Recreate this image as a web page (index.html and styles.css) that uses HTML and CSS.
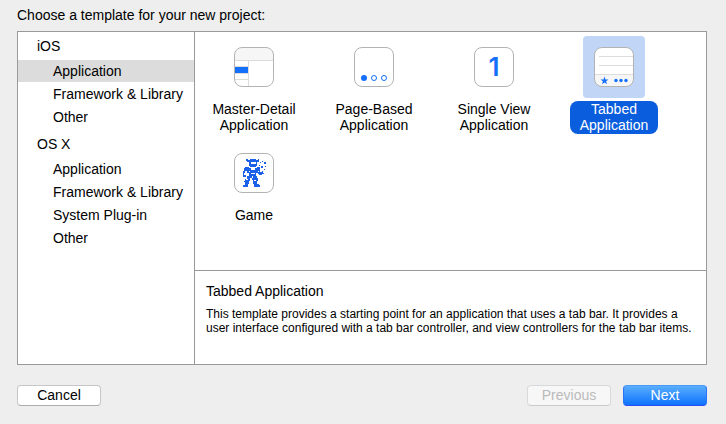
FILE: index.html
```
<!DOCTYPE html>
<html lang="en">

<head>
    <meta charset="UTF-8">
    <meta name="viewport" content="width=device-width, initial-scale=1.0">
    <title>New Project</title>
    <link rel="stylesheet" href="styles.css">
</head>

<body>
    <h1 class="sheet-title">Choose a template for your new project:</h1>

    <main class="panel">
        <!-- Sidebar -->
        <nav class="sidebar">
            <section class="group">
                <h2 class="group-title">iOS</h2>
                <a href="#ios-application" class="group-item active">Application</a>
                <a href="#ios-framework" class="group-item">Framework &amp; Library</a>
                <a href="#ios-other" class="group-item">Other</a>
            </section>
            <section class="group">
                <h2 class="group-title">OS X</h2>
                <a href="#osx-application" class="group-item">Application</a>
                <a href="#osx-framework" class="group-item">Framework &amp; Library</a>
                <a href="#osx-plugin" class="group-item">System Plug-in</a>
                <a href="#osx-other" class="group-item">Other</a>
            </section>
        </nav>

        <div class="content">
            <!-- Templates -->
            <div class="templates">
                <button type="button" class="template">
                    <span class="template-icon">
                        <svg viewBox="0 0 40 40" width="40" height="40">
                            <rect x="0.5" y="0.5" width="39" height="39" rx="7.5" fill="#fff" />
                            <path d="M1 13.5V8a7 7 0 0 1 7-7h24a7 7 0 0 1 7 7v5.5z" fill="#f6f6f6" />
                            <path d="M1 13.5h38M14.5 14v25M1 19.5h13M1 26.5h13M1 32.5h13" stroke="#dcdcdc" fill="none" />
                            <rect x="1" y="20" width="13" height="6" fill="#146ffb" />
                            <rect x="0.5" y="0.5" width="39" height="39" rx="7.5" fill="none" stroke="#b3b3b3" />
                        </svg>
                    </span>
                    <span class="template-name">Master-Detail<br>Application</span>
                </button>
                <button type="button" class="template">
                    <span class="template-icon">
                        <svg viewBox="0 0 40 40" width="40" height="40">
                            <rect x="0.5" y="0.5" width="39" height="39" rx="7.5" fill="#fff" stroke="#b3b3b3" />
                            <circle cx="10" cy="31" r="3" fill="#146ffb" />
                            <circle cx="20" cy="31" r="2.5" fill="none" stroke="#146ffb" />
                            <circle cx="30" cy="31" r="2.5" fill="none" stroke="#146ffb" />
                        </svg>
                    </span>
                    <span class="template-name">Page-Based<br>Application</span>
                </button>
                <button type="button" class="template">
                    <span class="template-icon"><span class="numeral">1</span></span>
                    <span class="template-name">Single View<br>Application</span>
                </button>
                <button type="button" class="template selected">
                    <span class="template-icon">
                        <svg viewBox="0 0 40 40" width="40" height="40">
                            <rect x="0.5" y="0.5" width="39" height="39" rx="7.5" fill="#fff" />
                            <path d="M1 27.5h38V32a7 7 0 0 1-7 7H8a7 7 0 0 1-7-7z" fill="#f6f6f6" />
                            <path d="M5 9.5h34M5 18.5h34M1 27.5h38" stroke="#dcdcdc" />
                            <path d="M10.500 29.500l1 2.900h3l-2.400 1.900.9 2.900-2.500-1.800L8 37.200l.9-2.900-2.400-1.900h3z" fill="#146ffb" />
                            <circle cx="22" cy="33.500" r="1.700" fill="#146ffb" />
                            <circle cx="27" cy="33.500" r="1.700" fill="#146ffb" />
                            <circle cx="32" cy="33.500" r="1.700" fill="#146ffb" />
                            <rect x="0.5" y="0.5" width="39" height="39" rx="7.5" fill="none" stroke="#b3b3b3" />
                        </svg>
                    </span>
                    <span class="template-name">Tabbed<br>Application</span>
                </button>
                <button type="button" class="template">
                    <span class="template-icon">
                        <svg viewBox="0 0 40 40" width="40" height="40">
                            <rect x="0.5" y="0.5" width="39" height="39" rx="7.5" fill="#fff" stroke="#b3b3b3" />
                            <g fill="#1b62e8" shape-rendering="crispEdges">
                                <!-- helmet -->
                                <path d="M12 6h2v1h2V6h6v1h2V6h1v3h-2v4h-1v1h-6v-1h-1V9h-2V8h-1z" />
                                <!-- body and arms -->
                                <path d="M11 14h4v1h2v2h4v-2h2v-1h3v4h-2v2h-2v3h-7v-3h-2v-2h-2v2h-1v2h2v2h-3v-2H9v-4h1v-3h1z" />
                                <path d="M25 18h1v1h2v-1h1v2h1v1h-2v1h-3v-1h-1v-2h1z" />
                                <!-- legs -->
                                <path d="M13 23h5v2h-2v3h-1v3h-1v3H9v-2h2v-3h-1v-1h1v-2h2z" />
                                <path d="M19 23h4v2h1v3h-1v3h2v1h1v2h-6v-3h-1v-4h-1v-2h1z" />
                                <!-- sparks -->
                                <path d="M28 8h1v1h-1zM26 9h1v1h-1zM30 9h2v2h-2zM27 13h2v2h-2zM31 13h1v1h-1zM25 12h1v1h-1zM30 16h1v1h-1z" />
                            </g>
                            <path d="M17 9h5v2h-5zM15 18h1v1h-1zM17 20h4v1h-4zM12 26h2v1h-2zM20 27h2v1h-2z" fill="#fff" shape-rendering="crispEdges" />
                        </svg>
                    </span>
                    <span class="template-name">Game</span>
                </button>
            </div>

            <!-- Description of the selected template -->
            <section class="detail">
                <h2 class="detail-title">Tabbed Application</h2>
                <p class="detail-text">This template provides a starting point for an application that uses a tab bar. It provides a user interface configured with a tab bar controller, and view controllers for the tab bar items.</p>
            </section>
        </div>
    </main>

    <footer class="actions">
        <button type="button" class="btn btn-cancel">Cancel</button>
        <button type="button" class="btn" disabled>Previous</button>
        <button type="button" class="btn btn-primary">Next</button>
    </footer>
</body>

</html>
```
FILE: styles.css
```
* {
    box-sizing: border-box;
}

body {
    display: flex;
    flex-direction: column;
    min-height: 100vh;
    margin: 0;
    padding: 6px 19px 18px 17px;
    background: #eee;
    color: #000;
    font-family: "Liberation Sans", Arial, sans-serif;
    font-size: 14px;
    line-height: 18px;
}

h1,
h2,
p {
    margin: 0;
    font-size: 14px;
    font-weight: normal;
}

button {
    font: inherit;
    color: inherit;
}

.sheet-title {
    margin-bottom: 7px;
}

.panel {
    display: flex;
    flex: 1;
    background: #fff;
    border: 1px solid #999;
}

/* Sidebar */
.sidebar {
    flex: none;
    width: 177px;
    border-right: 1px solid #999;
}

.group {
    margin-bottom: 2px;
}

.group-title {
    padding-left: 19px;
    line-height: 28px;
}

.group-item {
    display: block;
    margin-bottom: 1px;
    padding-left: 35px;
    color: inherit;
    line-height: 22px;
    text-decoration: none;
    white-space: nowrap;
}

.group-item.active {
    background: #dcdcdc;
}

/* Templates */
.content {
    display: flex;
    flex: 1;
    flex-direction: column;
    min-width: 0;
}

.templates {
    display: grid;
    flex: 1;
    grid-template-columns: repeat(auto-fill, 118px);
    align-content: start;
    gap: 8px 2px;
    padding-top: 4px;
}

.template {
    display: flex;
    flex-direction: column;
    align-items: center;
    gap: 3px;
    padding: 0;
    background: none;
    border: 0;
    line-height: 16px;
}

.template-icon {
    display: flex;
    padding: 11px;
    border-radius: 4px;
}

.numeral {
    width: 40px;
    height: 40px;
    background: #fff;
    border: 1px solid #b3b3b3;
    border-radius: 8px;
    color: #146ffb;
    font-family: Inter, sans-serif;
    font-size: 26px;
    font-weight: 600;
    line-height: 38px;
}

.template-name {
    padding: 0 10px 1px;
    border-radius: 8px;
}

.template.selected .template-icon {
    background: #c1d5f6;
}

.template.selected .template-name {
    background: #0a5ddc;
    color: #fff;
}

/* Description */
.detail {
    min-height: 94px;
    padding: 11px;
    border-top: 1px solid #999;
}

.detail-text {
    margin-top: 7px;
    font-size: 12px;
    line-height: 14px;
}

/* Buttons */
.actions {
    display: flex;
    gap: 12px;
    margin-top: 20px;
}

.btn {
    width: 84px;
    height: 21px;
    padding: 0 0 1px;
    background: #fff;
    border: 1px solid #c6c6c6;
    border-bottom-color: #adadad;
    border-radius: 4px;
    line-height: 18px;
}

.btn-cancel {
    margin-right: auto;
}

.btn:disabled {
    background: #f7f7f7;
    border-color: #d9d9d9;
    border-bottom-color: #cbcbcb;
    color: #bababa;
}

.btn-primary {
    background: linear-gradient(#5aaefc, #0d72ff);
    border-color: #4a9bf8 #2a74fa #2a4df5;
    color: #fff;
}
```
